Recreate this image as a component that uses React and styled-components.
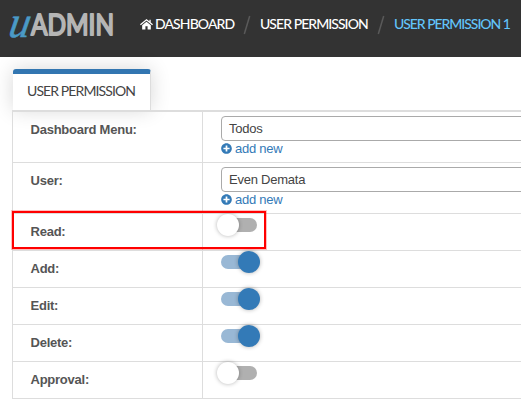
import React from "react";
import styled, { createGlobalStyle } from "styled-components";
import { FaPlusCircle } from "react-icons/fa";

const GlobalStyle = createGlobalStyle`
  * { box-sizing: border-box; }
  html, body { margin: 0; background: #fff; overflow: hidden; }
  body { font-family: "Liberation Sans", Arial, sans-serif; font-size: 13px; letter-spacing: -0.24px; color: #555; }
`;

const Page = styled.div`
  width: 521px;
  height: 405px;
  overflow: hidden;
`;

const Header = styled.header`
  display: flex;
  height: 57px;
  background: #333;
`;

const Logo = styled.svg`
  display: block;
  flex: none;
  width: 140px;
  height: 57px;
  letter-spacing: 0;
`;

const Breadcrumb = styled.nav`
  display: flex;
  align-items: center;
  height: 48px;
  white-space: nowrap;
`;

const Crumb = styled.a`
  flex: none;
  display: flex;
  align-items: center;
  width: ${(p) => p.$width}px;
  font: 500 14px/20px Lato, sans-serif;
  letter-spacing: ${(p) => p.$spacing}px;
  color: ${(p) => (p.$active ? "#62c4fa" : "#fff")};
`;

const HomeIcon = styled.svg`
  flex: none;
  width: 13px;
  height: 11px;
  margin-right: 2px;
`;

const Slash = styled.svg`
  flex: none;
  width: 8px;
  height: 20px;
  margin: 2px 9px 0 8px;
`;

const Tab = styled.div`
  width: 138px;
  height: 41px;
  margin: 12px 0 0 13px;
  padding: 8px 0 0 14px;
  border-top: 5px solid #3276b1;
  border-right: 1px solid #ddd;
  border-radius: 3px 3px 0 0;
  background: #fff;
  box-shadow: 0 0 20px rgba(0, 0, 0, 0.16);
  font: 14px/17px Lato, sans-serif;
  letter-spacing: -0.9px;
  color: #444;
  white-space: nowrap;
`;

const Form = styled.div`
  position: relative;
  width: 509px;
  margin-left: 12px;
  border-top: 2px solid #ddd;
  border-left: 1px solid #ddd;
`;

const Row = styled.div`
  display: flex;
  height: ${(p) => p.$height}px;
  border-bottom: 1px solid #ddd;
`;

const Label = styled.div`
  flex: none;
  width: 190px;
  padding: 10px 0 0 17.5px;
  border-right: 1px solid #ddd;
  font-weight: bold;
  line-height: 16px;
`;

const Field = styled.div`
  flex: 1;
  padding: 4px 0 0 18px;
`;

const Select = styled.div`
  width: 330px;
  height: 25px;
  padding-left: 7px;
  border: 1px solid #aaa;
  border-radius: 4px;
  background: #fff;
  color: #444;
  line-height: 23px;
`;

const AddLink = styled.a`
  display: flex;
  align-items: center;
  height: 16px;
  color: #337ab7;
  line-height: 16px;

  svg { width: 11px; height: 11px; margin: -2px 3px 0 0; }
`;

const Track = styled.div`
  display: flex;
  align-items: center;
  justify-content: ${(p) => (p.$on ? "flex-end" : "flex-start")};
  width: 36px;
  height: 14px;
  border-radius: 7px;
  background: ${(p) => (p.$on ? "#99b8d5" : "#b0b0b0")};
`;

const Knob = styled.div`
  flex: none;
  width: 22px;
  height: 22px;
  margin: 0 ${(p) => (p.$on ? "-3px" : "-4px")};
  border-radius: 50%;
  background: ${(p) => (p.$on ? "#337ab7" : "#fff")};
  box-shadow: 0 0 4px rgba(0, 0, 0, 0.3);
`;

const Highlight = styled.div`
  position: absolute;
  left: -1px;
  top: 99px;
  width: 254px;
  height: 38px;
  border: 2px solid #f00;
  box-shadow: 0 0 0 1px rgba(255, 0, 0, 0.25);
`;

const selects = [
  { label: "Dashboard Menu:", value: "Todos" },
  { label: "User:", value: "Even Demata" },
];

const toggles = [
  { label: "Read:", on: false },
  { label: "Add:", on: true },
  { label: "Edit:", on: true },
  { label: "Delete:", on: true },
  { label: "Approval:", on: false },
];

function Divider() {
  return (
    <Slash viewBox="0 0 8 20">
      <path d="M6.7 1L1.3 19" stroke="#5a5a5a" strokeWidth="1.5" />
    </Slash>
  );
}

export default function App() {
  return (
    <Page>
      <GlobalStyle />
      <Header>
        <Logo viewBox="0 0 140 57">
          <text transform="translate(7.5 36.5) skewX(-10)" fontFamily="Liberation Serif, serif" fontStyle="italic" fontSize="44" fill="#4a9ac6" stroke="#4a9ac6" strokeWidth=".6" textLength="21" lengthAdjust="spacingAndGlyphs">u</text>
          <text x="31" y="35" fontFamily="Lato, sans-serif" fontSize="29" fill="#b5b5b5" stroke="#b5b5b5" strokeWidth="2" strokeLinejoin="round" textLength="83" lengthAdjust="spacingAndGlyphs">ADMIN</text>
        </Logo>
        <Breadcrumb>
          <Crumb $width={95} $spacing={-0.9}>
            <HomeIcon viewBox="0 0 12 10">
              <path d="M6 2.4L2 5.7V9.7h3V6.7h2v3h3V5.7z" fill="#fff" />
              <path d="M.4 5.2L6 .7l5.6 4.5M9.3 .6v2.7" fill="none" stroke="#fff" strokeWidth="1.2" />
            </HomeIcon>
            DASHBOARD
          </Crumb>
          <Divider />
          <Crumb $width={109} $spacing={-0.95}>USER PERMISSION</Crumb>
          <Divider />
          <Crumb $width={118} $spacing={-1.05} $active>USER PERMISSION 1</Crumb>
        </Breadcrumb>
      </Header>
      <Tab>USER PERMISSION</Tab>
      <Form>
        {selects.map((s) => (
          <Row key={s.label} $height={51}>
            <Label>{s.label}</Label>
            <Field>
              <Select>{s.value}</Select>
              <AddLink><FaPlusCircle />add new</AddLink>
            </Field>
          </Row>
        ))}
        {toggles.map((t) => (
          <Row key={t.label} $height={37}>
            <Label>{t.label}</Label>
            <Field>
              <Track $on={t.on}><Knob $on={t.on} /></Track>
            </Field>
          </Row>
        ))}
        <Highlight />
      </Form>
    </Page>
  );
}
